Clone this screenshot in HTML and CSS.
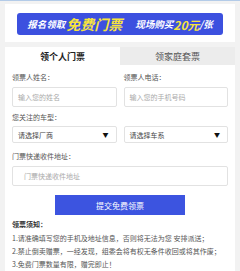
FILE: index.html
```html
<!DOCTYPE html>
<html>
<head>
<meta charset="utf-8">
<link rel="stylesheet" href="styles.css">
</head>
<body>
<div class="topline"></div>
<div class="head">
  <div class="banner">
    <span class="w">报名领取</span><span class="y big">免费门票</span><span class="w gap">现场购买</span><span class="y mid">20元</span><span class="w">/张</span>
  </div>
</div>
<div class="tabs">
  <div class="tab active">领个人门票</div>
  <div class="tab">领家庭套票</div>
</div>
<div class="form">
  <div class="row">
    <div class="col">
      <div class="label">领票人姓名：</div>
      <div class="input">输入您的姓名</div>
    </div>
    <div class="col">
      <div class="label">领票人电话：</div>
      <div class="input">输入您的手机号码</div>
    </div>
  </div>
  <div class="label l2">您关注的车型：</div>
  <div class="row">
    <div class="col"><div class="select"><span>请选择厂商</span><span class="arrow">▼</span></div></div>
    <div class="col"><div class="select"><span>请选择车系</span><span class="arrow">▼</span></div></div>
  </div>
  <div class="label l3">门票快递收件地址：</div>
  <div class="input addr">门票快递收件地址</div>
  <div class="btnwrap"><div class="btn">提交免费领票</div></div>
  <div class="notes">
    <div class="ntitle">领票须知：</div>
    <div>1.请准确填写您的手机及地址信息，否则将无法为您 安排派送；</div>
    <div>2.禁止倒卖赠票，一经发现，组委会将有权无条件收回或将其作废；</div>
    <div>3.免费门票数量有限，赠完即止！</div>
  </div>
</div>
</body>
</html>
```
FILE: styles.css
```css
html, body {
  margin: 0;
  padding: 0;
}
body {
  background: #f2f2f2;
  font-family: "Noto Sans CJK SC", "Noto Sans", sans-serif;
  color: #555;
  width: 240px;
  overflow: hidden;
}
.topline {
  height: 1px;
  background: #b3cbe8;
  margin-bottom: 3px;
}
.head {
  margin: 0 5px;
  background: #fff;
  padding: 9px 12px 7px;
}
.banner {
  height: 22px;
  background: #3c50df;
  border-radius: 3px;
  display: flex;
  align-items: center;
  justify-content: center;
  font-weight: bold;
  font-style: italic;
  white-space: nowrap;
}
.w { color: #fff; font-size: 9.5px; }
.y { color: #f7e43c; }
.big { font-size: 14px; margin-left: 1px; }
.mid { font-size: 12px; }
.gap { margin-left: 13px; }
.tabs {
  margin: 5px 5px 0;
  display: flex;
  height: 18px;
}
.tab {
  flex: 1;
  display: flex;
  align-items: center;
  justify-content: center;
  font-size: 9px;
  background: #ececec;
  color: #555;
}
.tab.active {
  background: #fff;
  color: #222;
  font-weight: bold;
}
.form {
  margin: 0 5px;
  background: #fff;
  padding: 7px 7px 20px;
  min-height: 220px;
}
.row {
  display: flex;
  gap: 7px;
}
.col { flex: 1; }
.label {
  font-size: 7px;
  line-height: 10px;
  color: #555;
  margin-bottom: 5px;
}
.l2 { margin-top: 5px; margin-bottom: 4px; }
.l3 { margin-top: 8px; margin-bottom: 5px; }
.input, .select {
  height: 20px;
  border: 1px solid #e2e2e2;
  border-radius: 2px;
  box-sizing: border-box;
  font-size: 7px;
  color: #aaa;
  display: flex;
  align-items: center;
  padding: 0 5px;
}
.select {
  color: #444;
  justify-content: space-between;
  height: 17px;
}
.arrow {
  font-size: 6px;
  color: #111;
  margin-right: 2px;
}
.addr {
  padding-left: 11px;
  height: 20px;
}
.btnwrap {
  display: flex;
  justify-content: center;
  margin-top: 9px;
}
.btn {
  width: 130px;
  height: 20px;
  background: #3c54e0;
  color: #fff;
  font-size: 8px;
  display: flex;
  align-items: center;
  justify-content: center;
}
.notes {
  margin-top: 3px;
  font-size: 7px;
  line-height: 13px;
  color: #555;
  white-space: nowrap;
}
.ntitle {
  font-weight: bold;
  color: #333;
  margin-bottom: 1px;
}
```
